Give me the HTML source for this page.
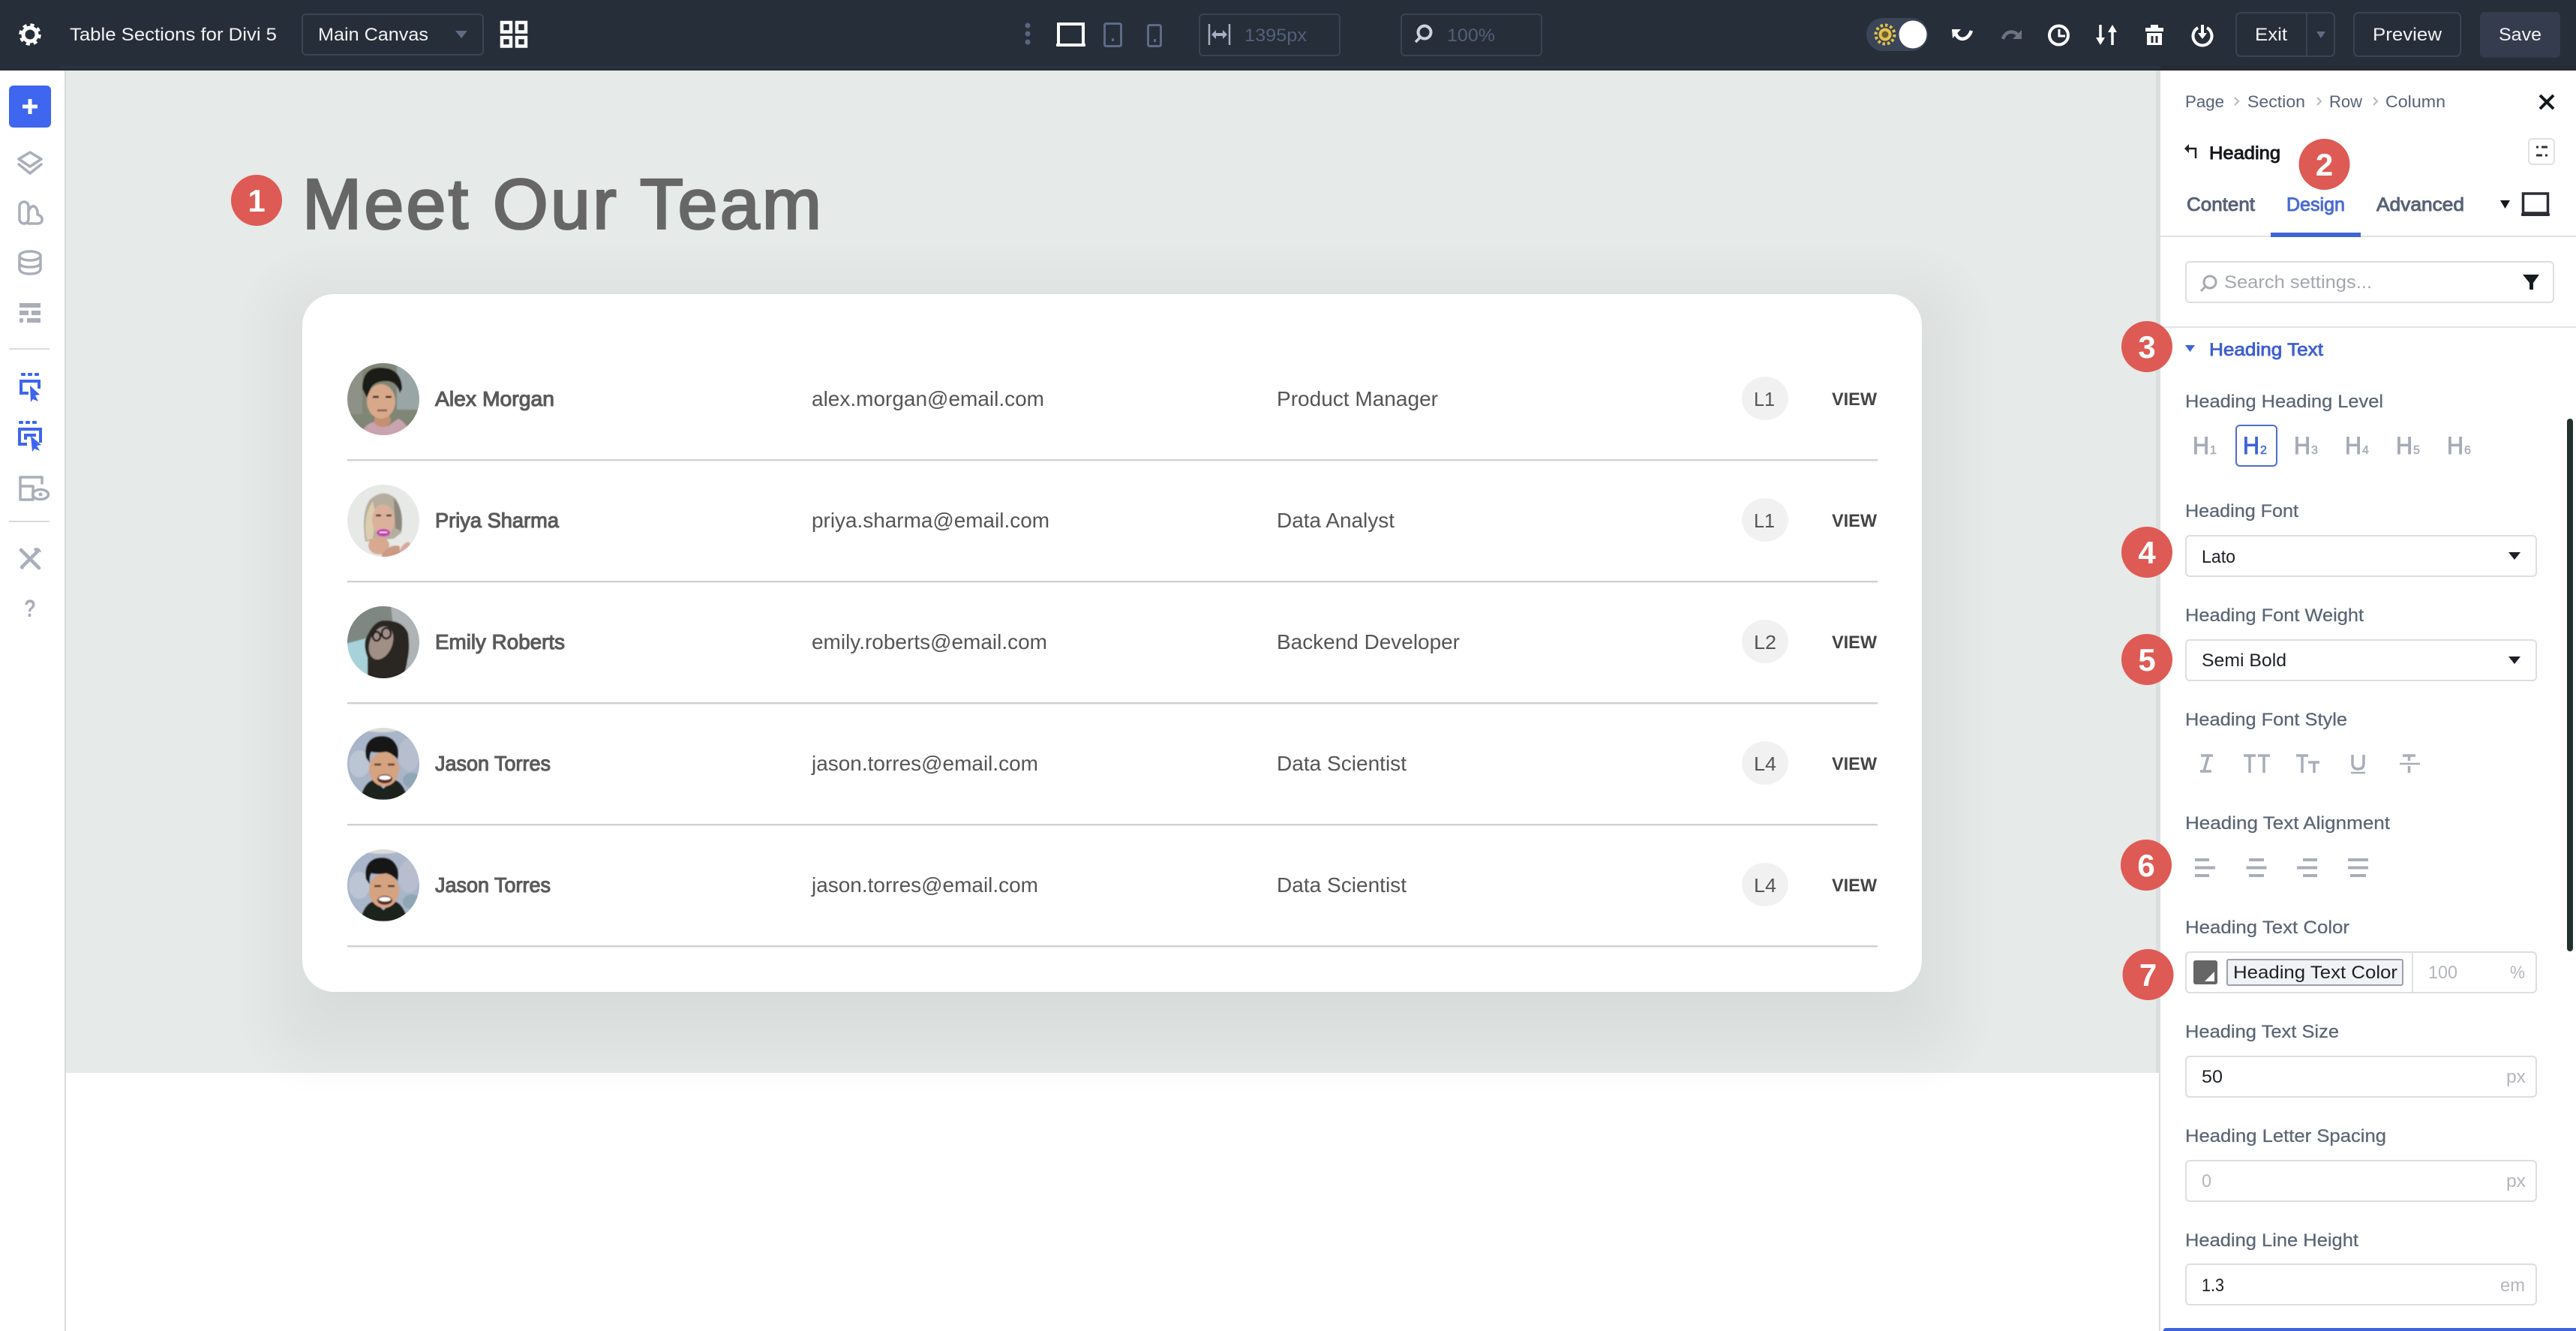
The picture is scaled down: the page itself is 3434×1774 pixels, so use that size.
<!DOCTYPE html>
<html lang="en">
<head>
<meta charset="utf-8">
<title>Table Sections for Divi 5</title>
<style>
html,body{margin:0;padding:0;background:#fff;width:3434px;height:1774px;overflow:hidden}
svg{display:block;font-family:"Liberation Sans",sans-serif}
.lb{font-size:24px;fill:#5b6574;stroke:#5b6574;stroke-width:.25px}
.tb{font-size:24px;fill:#f2f3f5}
.nm{font-size:28px;fill:#5a5a5a;stroke:#5a5a5a;stroke-width:1.1px}
.tx{font-size:28px;fill:#555}
.lv{font-size:26px;fill:#555}
.vw{font-size:24px;font-weight:700;fill:#444}
.bd{font-size:42px;font-weight:700;fill:#fff;text-anchor:middle}
.hh{font-size:32px;fill:#a7abb6;stroke:#a7abb6;stroke-width:1px}
.hs{font-size:16px;fill:#a7abb6;stroke:#a7abb6;stroke-width:.5px}
.gy{font-size:24px;fill:#b3b6bc}
.dk{font-size:24px;fill:#1d2024}
.tab{font-size:25px;fill:#566176;stroke:#566176;stroke-width:.9px}
</style>
</head>
<body>
<svg xmlns="http://www.w3.org/2000/svg" width="3434" height="1774" viewBox="0 0 3434 1774">
<defs>
<filter id="soft" x="-10%" y="-10%" width="120%" height="120%"><feGaussianBlur stdDeviation="0.8"/></filter>
<clipPath id="cp"><circle r="48"/></clipPath>
<g id="jason" clip-path="url(#cp)">
<g filter="url(#soft)">
<rect x="-50" y="-50" width="100" height="100" fill="#a9b5c9"/>
<ellipse cx="-2" cy="-50" rx="30" ry="8" fill="#dcdcd8"/>
<ellipse cx="-32" cy="0" rx="14" ry="18" fill="#bcc5d4"/>
<ellipse cx="34" cy="-12" rx="14" ry="22" fill="#b7bfcf"/>
<ellipse cx="38" cy="22" rx="12" ry="10" fill="#8fa6b4"/>
<path d="M-31 48Q-26 24-12 21L0 33L14 21Q27 24 33 48Z" fill="#1b201d"/>
<path d="M-12 21Q0 38 14 21L12 12H-10Z" fill="#c79676"/>
<ellipse cx="1" cy="7" rx="20" ry="23" fill="#d6a381"/>
<path d="M-23-8Q-27-30-10-36Q12-41 19-22Q21-14 19-6Q12-14 4-16Q-8-14-16-16Q-19-12-18-1Z" fill="#141312"/>
<path d="M-12 1H-3M6 1H15" stroke="#4b3527" stroke-width="2.500"/>
<ellipse cx="2" cy="20" rx="10" ry="6" fill="#5b2c22"/>
<ellipse cx="2" cy="18.500" rx="8" ry="3" fill="#fff"/>
</g>
</g>
</defs>

<!-- base -->
<rect width="3434" height="1774" fill="#fff"/>
<rect x="86" y="94" width="2" height="1680" fill="#d9dbdc"/>
<rect x="88" y="94" width="2790" height="1336" fill="#e6eae9"/>

<!-- card shadow (layered) -->
<g fill="#1e1e32" fill-opacity=".0055">
<rect x="318" y="328" width="2337" height="1129" rx="112"/>
<rect x="327" y="337" width="2319" height="1111" rx="104"/>
<rect x="336" y="346" width="2301" height="1093" rx="96"/>
<rect x="345" y="355" width="2283" height="1075" rx="88"/>
<rect x="354" y="364" width="2265" height="1057" rx="80"/>
<rect x="363" y="373" width="2247" height="1039" rx="72"/>
<rect x="372" y="382" width="2229" height="1021" rx="64"/>
<rect x="381" y="391" width="2211" height="1003" rx="56"/>
<rect x="390" y="400" width="2193" height="985" rx="50"/>
<rect x="399" y="409" width="2175" height="967" rx="46"/>
<rect x="408" y="418" width="2157" height="949" rx="42"/>
<rect x="417" y="427" width="2139" height="931" rx="42"/>
<rect x="426" y="436" width="2121" height="913" rx="42"/>
<rect x="435" y="445" width="2103" height="895" rx="42"/>
<rect x="444" y="454" width="2085" height="877" rx="42"/>
<rect x="453" y="463" width="2067" height="859" rx="42"/>
</g>
<rect x="403" y="392" width="2159" height="930" rx="42" fill="#fff"/>

<!-- heading -->
<text x="403" y="304.500" font-size="95" fill="#666" stroke="#666" stroke-width="2.800" textLength="692" lengthAdjust="spacing">Meet Our Team</text>

<!-- row dividers -->
<g fill="#d0d0d0">
<rect x="463" y="612" width="2040" height="2.4"/>
<rect x="463" y="774" width="2040" height="2.4"/>
<rect x="463" y="936" width="2040" height="2.4"/>
<rect x="463" y="1098" width="2040" height="2.4"/>
<rect x="463" y="1260" width="2040" height="2.4"/>
</g>

<!-- avatars -->
<g transform="translate(511,532)" clip-path="url(#cp)">
<g filter="url(#soft)">
<rect x="-50" y="-50" width="100" height="100" fill="#7f8676"/>
<rect x="-50" y="-50" width="22" height="70" fill="#8e9186"/>
<rect x="18" y="-50" width="32" height="64" fill="#9aa5a6"/>
<path d="M-32 50Q-24 30-8 30L6 36L20 26Q32 32 38 50Z" fill="#c9a3ad"/>
<ellipse cx="-1" cy="28" rx="11" ry="9" fill="#c4906f"/>
<ellipse cx="-3" cy="3" rx="19" ry="23" fill="#d8a88b"/>
<path d="M-28-14Q-28-42-4-42Q24-42 25-14L22-8Q18-24 4-24Q-12-24-17-14L-22-2Z" fill="#1d1a18"/>
<path d="M-14-3H-6M3-3H11" stroke="#2a1e18" stroke-width="2.500"/>
<path d="M-8 15H5" stroke="#90564a" stroke-width="2.500"/>
</g>
</g>
<g transform="translate(511,694)" clip-path="url(#cp)">
<g filter="url(#soft)">
<rect x="-50" y="-50" width="100" height="100" fill="#e7e9e6"/>
<path d="M20 50Q22 30 34 28L48 50Z" fill="#d9aaa0"/>
<path d="M-24 28Q-30-10-18-28Q0-44 16-30Q28-12 24 16L14 24L-12 26Z" fill="#b5ae9f"/>
<path d="M-22 26Q-28-6-14-26L-10-8L-14 24Z" fill="#dccdae"/>
<path d="M14-30Q28-16 24 14L16 10Z" fill="#8d887e"/>
<ellipse cx="0" cy="-1" rx="15" ry="21" fill="#dbb19b"/>
<path d="M-10-7H-3M4-7H11" stroke="#44352c" stroke-width="2.500"/>
<ellipse cx="0" cy="16" rx="9" ry="5" fill="#c63fb0"/>
<path d="M-5 15.500H5" stroke="#fff" stroke-width="1.500"/>
<ellipse cx="-6" cy="33" rx="14" ry="12" fill="#d7a991"/>
<path d="M-2 44Q10 30 22 34L22 50H-2Z" fill="#cb9b83"/>
</g>
</g>
<g transform="translate(511,856)" clip-path="url(#cp)">
<g filter="url(#soft)">
<rect x="-50" y="-50" width="100" height="100" fill="#7e8782"/>
<path d="M10-50H50V50H20Z" fill="#aeb3b6"/>
<path d="M-50 2L-20 -6L-18 50H-50Z" fill="#a8d2d9"/>
<path d="M-24-3Q-14-28 0-29Q26-30 33-12Q36 8 32 24Q30 42 22 50H-21L-21 20Q-26 8-24-3Z" fill="#2c2724"/>
<ellipse cx="-3" cy="1" rx="15" ry="23" transform="rotate(22 -3 1)" fill="#a18f86"/>
<ellipse cx="-9" cy="-8" rx="5" ry="6" fill="none" stroke="#191716" stroke-width="2.500"/>
<ellipse cx="4" cy="-12" rx="6" ry="7" fill="none" stroke="#191716" stroke-width="2.500"/>
</g>
</g>
<use href="#jason" x="511" y="1018"/>
<use href="#jason" x="511" y="1180"/>

<!-- rows -->
<text x="580" y="541" class="nm" textLength="159" lengthAdjust="spacingAndGlyphs">Alex Morgan</text>
<text x="580" y="703" class="nm" textLength="165" lengthAdjust="spacingAndGlyphs">Priya Sharma</text>
<text x="580" y="865" class="nm" textLength="173" lengthAdjust="spacingAndGlyphs">Emily Roberts</text>
<text x="580" y="1027" class="nm" textLength="154" lengthAdjust="spacingAndGlyphs">Jason Torres</text>
<text x="580" y="1189" class="nm" textLength="154" lengthAdjust="spacingAndGlyphs">Jason Torres</text>

<text x="1082" y="541" class="tx" textLength="310" lengthAdjust="spacingAndGlyphs">alex.morgan@email.com</text>
<text x="1082" y="703" class="tx" textLength="317" lengthAdjust="spacingAndGlyphs">priya.sharma@email.com</text>
<text x="1082" y="865" class="tx" textLength="314" lengthAdjust="spacingAndGlyphs">emily.roberts@email.com</text>
<text x="1082" y="1027" class="tx" textLength="302" lengthAdjust="spacingAndGlyphs">jason.torres@email.com</text>
<text x="1082" y="1189" class="tx" textLength="302" lengthAdjust="spacingAndGlyphs">jason.torres@email.com</text>

<text x="1702" y="541" class="tx" textLength="215" lengthAdjust="spacingAndGlyphs">Product Manager</text>
<text x="1702" y="703" class="tx" textLength="157" lengthAdjust="spacingAndGlyphs">Data Analyst</text>
<text x="1702" y="865" class="tx" textLength="244" lengthAdjust="spacingAndGlyphs">Backend Developer</text>
<text x="1702" y="1027" class="tx" textLength="173" lengthAdjust="spacingAndGlyphs">Data Scientist</text>
<text x="1702" y="1189" class="tx" textLength="173" lengthAdjust="spacingAndGlyphs">Data Scientist</text>

<g fill="#f1f1f1">
<ellipse cx="2353" cy="531" rx="31" ry="29"/>
<ellipse cx="2353" cy="693" rx="31" ry="29"/>
<ellipse cx="2353" cy="855" rx="31" ry="29"/>
<ellipse cx="2353" cy="1017" rx="31" ry="29"/>
<ellipse cx="2353" cy="1179" rx="31" ry="29"/>
</g>
<text x="2338" y="541" class="lv" textLength="28" lengthAdjust="spacingAndGlyphs">L1</text>
<text x="2338" y="703" class="lv" textLength="28" lengthAdjust="spacingAndGlyphs">L1</text>
<text x="2338" y="865" class="lv" textLength="30" lengthAdjust="spacingAndGlyphs">L2</text>
<text x="2338" y="1027" class="lv" textLength="30" lengthAdjust="spacingAndGlyphs">L4</text>
<text x="2338" y="1189" class="lv" textLength="30" lengthAdjust="spacingAndGlyphs">L4</text>
<text x="2442" y="540" class="vw" textLength="60" lengthAdjust="spacingAndGlyphs">VIEW</text>
<text x="2442" y="702" class="vw" textLength="60" lengthAdjust="spacingAndGlyphs">VIEW</text>
<text x="2442" y="864" class="vw" textLength="60" lengthAdjust="spacingAndGlyphs">VIEW</text>
<text x="2442" y="1026" class="vw" textLength="60" lengthAdjust="spacingAndGlyphs">VIEW</text>
<text x="2442" y="1188" class="vw" textLength="60" lengthAdjust="spacingAndGlyphs">VIEW</text>

<!-- top bar -->
<rect width="3434" height="94" fill="#262e39"/>
<rect x="80" y="89" width="2800" height="1" fill="#343c48"/>
<rect x="2880" y="88" width="554" height="6" fill="#272a30"/>
<g fill="none" stroke="#fff">
<circle cx="40" cy="46" r="9" stroke-width="5"/>
<circle cx="40" cy="46" r="12.500" stroke-width="4.500" stroke-dasharray="5 4.820"/>
</g>
<text x="93" y="54" class="tb" textLength="276" lengthAdjust="spacingAndGlyphs">Table Sections for Divi 5</text>
<rect x="403" y="19" width="241" height="54" rx="5" fill="none" stroke="#3c4553" stroke-width="2"/>
<text x="424" y="54" class="tb" textLength="147" lengthAdjust="spacingAndGlyphs">Main Canvas</text>
<path d="M607 41H623L615 51Z" fill="#5f6b85"/>
<g fill="none" stroke="#fff" stroke-width="4.500">
<rect x="669" y="30" width="12" height="12.500"/><rect x="689" y="30" width="12" height="12.500"/>
<rect x="669" y="50" width="12" height="11.500"/><rect x="689" y="50" width="12" height="11.500"/>
</g>
<g fill="#5a6680"><circle cx="1370" cy="34" r="3.500"/><circle cx="1370" cy="45" r="3.500"/><circle cx="1370" cy="56" r="3.500"/></g>
<rect x="1411" y="32" width="33" height="28" fill="none" stroke="#fff" stroke-width="4"/>
<rect x="1408" y="58" width="39" height="4" rx="1" fill="#fff"/>
<rect x="1472.500" y="31.500" width="22" height="30" rx="2" fill="none" stroke="#5d6a88" stroke-width="3"/>
<rect x="1482" y="51" width="3" height="4" fill="#5d6a88"/>
<rect x="1530.500" y="33.500" width="17" height="28" rx="2" fill="none" stroke="#5d6a88" stroke-width="3"/>
<rect x="1538" y="52" width="3" height="4" fill="#5d6a88"/>
<rect x="1599" y="19" width="187" height="55" rx="5" fill="none" stroke="#3a4351" stroke-width="2"/>
<path d="M1612 32V60M1639 32V60" stroke="#a7afc4" stroke-width="2.500"/>
<path d="M1615 46L1621 40V44H1630V40L1636 46L1630 52V48H1621V52Z" fill="#a7afc4"/>
<text x="1659" y="55" class="tb" style="fill:#54607a" textLength="83" lengthAdjust="spacingAndGlyphs">1395px</text>
<rect x="1868" y="19" width="187" height="55" rx="5" fill="none" stroke="#3a4351" stroke-width="2"/>
<circle cx="1899" cy="43" r="8.500" fill="none" stroke="#cdd2dc" stroke-width="4"/>
<path d="M1893 50L1887 56" stroke="#cdd2dc" stroke-width="3.500"/>
<text x="1929" y="55" class="tb" style="fill:#54607a" textLength="64" lengthAdjust="spacingAndGlyphs">100%</text>
<rect x="2488" y="24" width="82" height="44" rx="22" fill="#3a4658"/>
<circle cx="2513" cy="46" r="12.500" fill="none" stroke="#e5c04a" stroke-width="4" stroke-dasharray="3.500 3"/>
<circle cx="2513" cy="46" r="8.500" fill="#e5c04a"/>
<circle cx="2513" cy="46" r="4.500" fill="#6c5f30"/>
<circle cx="2550" cy="46" r="18.500" fill="#fff"/>
<path d="M2607 44C2610 55 2623 55 2628 41" fill="none" stroke="#fff" stroke-width="4.500"/>
<path d="M2602 39H2614L2603 51Z" fill="#fff"/>
<path d="M2670 52C2673 41 2685 40 2690 47" fill="none" stroke="#6d7380" stroke-width="4.500"/>
<path d="M2695 40V52H2683Z" fill="#6d7380"/>
<circle cx="2744.500" cy="47" r="12.500" fill="none" stroke="#fff" stroke-width="4"/>
<path d="M2745 39V48H2753" fill="none" stroke="#fff" stroke-width="3"/>
<path d="M2800 33V52M2816 41V60" stroke="#fff" stroke-width="3.500"/>
<path d="M2794 50H2806L2800 60ZM2810 43H2822L2816 33Z" fill="#fff"/>
<path d="M2867 37V33H2877V37H2884V42H2860V37ZM2862 44H2882V60H2862Z" fill="#fff"/>
<path d="M2869 48V57M2875 48V57" stroke="#262e39" stroke-width="3"/>
<path d="M2930 37A12.500 12.500 0 1 0 2942 37" fill="none" stroke="#fff" stroke-width="4"/>
<path d="M2936 33V46" stroke="#fff" stroke-width="4"/>
<path d="M2930 44H2942L2936 52Z" fill="#fff"/>
<rect x="2981" y="17" width="131" height="58" rx="6" fill="none" stroke="#3a4351" stroke-width="2"/>
<rect x="3074" y="17" width="2" height="58" fill="#3a4351"/>
<text x="3006" y="54" class="tb" textLength="43" lengthAdjust="spacingAndGlyphs">Exit</text>
<path d="M3088 42H3100L3094 51Z" fill="#5f6b85"/>
<rect x="3138" y="17" width="142" height="58" rx="6" fill="none" stroke="#3a4351" stroke-width="2"/>
<text x="3163" y="54" class="tb" textLength="92" lengthAdjust="spacingAndGlyphs">Preview</text>
<rect x="3306" y="16" width="107" height="61" rx="6" fill="#343c4d"/>
<text x="3331" y="54" class="tb" textLength="57" lengthAdjust="spacingAndGlyphs">Save</text>

<!-- left sidebar -->
<rect x="12" y="114" width="56" height="56" rx="6" fill="#3e66ee"/>
<path d="M40 132V152M30 142H50" stroke="#fff" stroke-width="5"/>
<g fill="none" stroke="#a9aeb9" stroke-width="3.500" stroke-linejoin="round" stroke-linecap="round">
<path d="M40 203L55 212L40 222L25 212Z"/>
<path d="M25 219L40 231L55 219"/>
<rect x="26" y="269" width="12" height="29" rx="6"/>
<path d="M38 281Q43 271 48 277Q51 281 50 286Q57 288 56 294Q55 298 50 298H38"/>
<ellipse cx="40" cy="341" rx="14" ry="6"/>
<path d="M26 341V359Q28 365 40 365Q52 365 54 359V341M26 351Q28 356 40 356Q52 356 54 351"/>
<path d="M30 636H56V644M32 636H27V666H42M28 648H44V666"/>
<ellipse cx="54" cy="659" rx="10.500" ry="6.500"/>
</g>
<circle cx="54" cy="659" r="2.500" fill="#a9aeb9"/>
<path d="M28 733L52 757M51 734L29 756" stroke="#a9aeb9" stroke-width="4.500" stroke-linecap="round"/>
<path d="M45 731Q53 728 55 736L50 735L48 739Z M27 757L33 752L31 759Z" fill="#a9aeb9"/>
<g fill="#a9aeb9">
<rect x="26" y="404" width="28" height="6"/>
<rect x="26" y="414" width="12" height="6"/><rect x="42" y="414" width="12" height="6"/>
<rect x="26" y="424" width="5" height="6" rx="2"/><rect x="36" y="424" width="18" height="6"/>
</g>
<rect x="12" y="464" width="54" height="2" fill="#d9dbde"/>
<rect x="12" y="694" width="54" height="2" fill="#d9dbde"/>
<g fill="#3e66ee">
<rect x="28" y="497" width="6" height="4" rx="1"/><rect x="37" y="497" width="6" height="4" rx="1"/><rect x="46" y="497" width="6" height="4" rx="1"/>
<path d="M26 506H54V518H50V510H30V522H38V526H26Z"/>
<path d="M40 514L53 526L47 527L51 535L44 532L41 536Z"/>
<rect x="25" y="561" width="6" height="4" rx="1"/><rect x="34" y="561" width="6" height="4" rx="1"/><rect x="43" y="561" width="6" height="4" rx="1"/>
<path d="M24 570H56V590H52V574H28V590H36V594H24ZM32 578H48V582H36V586H32Z"/>
<path d="M41 581L55 593L49 594L53 601L46 598L43 602Z"/>
</g>
<text x="32" y="822" font-size="32" font-weight="700" fill="#a9aeb9" textLength="16" lengthAdjust="spacingAndGlyphs">?</text>

<!-- right panel -->
<rect x="2874" y="94" width="6" height="1336" fill="#dcdfdf"/>
<rect x="2880" y="94" width="554" height="1680" fill="#fff"/>
<rect x="2878" y="1430" width="2" height="344" fill="#dcdcdc"/>

<text x="2913" y="143" font-size="22" fill="#56617a" textLength="52" lengthAdjust="spacingAndGlyphs">Page</text>
<text x="2996" y="143" font-size="22" fill="#56617a" textLength="77" lengthAdjust="spacingAndGlyphs">Section</text>
<text x="3105" y="143" font-size="22" fill="#56617a" textLength="44" lengthAdjust="spacingAndGlyphs">Row</text>
<text x="3180" y="143" font-size="22" fill="#56617a" textLength="80" lengthAdjust="spacingAndGlyphs">Column</text>
<path d="M2979 130L2984 135L2979 140M3089 130L3094 135L3089 140M3164 130L3169 135L3164 140" fill="none" stroke="#b4b8c0" stroke-width="2"/>
<path d="M3386 127L3404 145M3404 127L3386 145" stroke="#15181c" stroke-width="4"/>

<path d="M2927 211V198H2916" fill="none" stroke="#222" stroke-width="2.500"/>
<path d="M2918 192V204L2912 198Z" fill="#222"/>
<text x="2945" y="212" font-size="24" fill="#17191d" stroke="#17191d" stroke-width=".9" textLength="95" lengthAdjust="spacingAndGlyphs">Heading</text>
<rect x="3371" y="185" width="34" height="34" rx="5" fill="#fff" stroke="#dfe1e4" stroke-width="2"/>
<path d="M3381 196H3384M3388 196H3396M3381 207H3389M3393 207H3396" stroke="#333" stroke-width="3"/>

<text x="2915" y="281" class="tab" textLength="91" lengthAdjust="spacingAndGlyphs">Content</text>
<text x="3048" y="281" class="tab" style="fill:#4a6bd2;stroke:#4a6bd2" textLength="78" lengthAdjust="spacingAndGlyphs">Design</text>
<text x="3168" y="281" class="tab" textLength="117" lengthAdjust="spacingAndGlyphs">Advanced</text>
<path d="M3333 267H3346L3339.500 278Z" fill="#15181c"/>
<rect x="3363.500" y="258" width="33" height="26" fill="none" stroke="#2a2d33" stroke-width="3.500"/>
<rect x="3361" y="284" width="38" height="4" rx="1" fill="#2a2d33"/>
<rect x="2880" y="314" width="554" height="2" fill="#dfe1e4"/>
<rect x="3027" y="310" width="120" height="6" fill="#3f64d8"/>

<rect x="2914" y="349" width="490" height="54" rx="5" fill="#fff" stroke="#dcdee1" stroke-width="2"/>
<circle cx="2946" cy="376" r="8" fill="none" stroke="#a6a9b0" stroke-width="3"/>
<path d="M2940 382L2934 388" stroke="#a6a9b0" stroke-width="3"/>
<text x="2965" y="384" font-size="24" fill="#a4a7ae" textLength="197" lengthAdjust="spacingAndGlyphs">Search settings...</text>
<path d="M3363 366H3385L3377 377V386H3372V377Z" fill="#17191d"/>
<rect x="2880" y="435" width="554" height="2" fill="#e2e4e7"/>

<path d="M2913 460H2926L2919.500 469Z" fill="#3f64d8"/>
<text x="2945" y="474" font-size="24" fill="#3e5fd0" stroke="#3e5fd0" stroke-width=".8" textLength="152" lengthAdjust="spacingAndGlyphs">Heading Text</text>

<text x="2913" y="543" class="lb" textLength="264" lengthAdjust="spacingAndGlyphs">Heading Heading Level</text>
<rect x="2981" y="567" width="54" height="54" rx="5" fill="#fff" stroke="#4f6ccd" stroke-width="2"/>
<text x="2923" y="605" class="hh" textLength="22" lengthAdjust="spacingAndGlyphs">H</text><text x="2946" y="605" class="hs">1</text>
<text x="2990" y="605" class="hh" style="fill:#3f64d8;stroke:#3f64d8" textLength="22" lengthAdjust="spacingAndGlyphs">H</text><text x="3013" y="605" class="hs" style="fill:#3f64d8;stroke:#3f64d8">2</text>
<text x="3058" y="605" class="hh" textLength="22" lengthAdjust="spacingAndGlyphs">H</text><text x="3081" y="605" class="hs">3</text>
<text x="3126" y="605" class="hh" textLength="22" lengthAdjust="spacingAndGlyphs">H</text><text x="3149" y="605" class="hs">4</text>
<text x="3194" y="605" class="hh" textLength="22" lengthAdjust="spacingAndGlyphs">H</text><text x="3217" y="605" class="hs">5</text>
<text x="3262" y="605" class="hh" textLength="22" lengthAdjust="spacingAndGlyphs">H</text><text x="3285" y="605" class="hs">6</text>

<rect x="3422" y="558" width="8" height="710" rx="4" fill="#22302e"/>

<text x="2913" y="689" class="lb" textLength="151" lengthAdjust="spacingAndGlyphs">Heading Font</text>
<rect x="2914" y="714" width="467" height="54" rx="5" fill="#fff" stroke="#dcdee1" stroke-width="2"/>
<text x="2935" y="750" class="dk" textLength="45" lengthAdjust="spacingAndGlyphs">Lato</text>
<path d="M3344 736H3360L3352 746Z" fill="#1d2024"/>

<text x="2913" y="828" class="lb" textLength="238" lengthAdjust="spacingAndGlyphs">Heading Font Weight</text>
<rect x="2914" y="853" width="467" height="54" rx="5" fill="#fff" stroke="#dcdee1" stroke-width="2"/>
<text x="2935" y="888" class="dk" textLength="113" lengthAdjust="spacingAndGlyphs">Semi Bold</text>
<path d="M3344 875H3360L3352 885Z" fill="#1d2024"/>

<text x="2913" y="967" class="lb" textLength="216" lengthAdjust="spacingAndGlyphs">Heading Font Style</text>
<path d="M2934 1007H2950M2933 1028H2948M2944 1007L2938 1028" fill="none" stroke="#a9adb8" stroke-width="3.500"/>
<path d="M2991 1007H3007M2999 1007V1030M3010 1007H3026M3018 1007V1030" fill="none" stroke="#a9adb8" stroke-width="3.500"/>
<path d="M3061 1007H3077M3069 1007V1030M3077 1016H3092M3085 1016V1030" fill="none" stroke="#a9adb8" stroke-width="3.500"/>
<path d="M3136 1006V1017Q3136 1025 3143.500 1025Q3151 1025 3151 1017V1006" fill="none" stroke="#a9adb8" stroke-width="3.500"/>
<path d="M3134 1030H3153" stroke="#a9adb8" stroke-width="2.500"/>
<path d="M3203 1007H3220M3211.500 1007V1014M3211.500 1021V1030" fill="none" stroke="#a9adb8" stroke-width="3.500"/>
<path d="M3199 1018H3226" stroke="#a9adb8" stroke-width="2.500"/>

<text x="2913" y="1105" class="lb" textLength="273" lengthAdjust="spacingAndGlyphs">Heading Text Alignment</text>
<g stroke="#a9adb8" stroke-width="4">
<path d="M2926 1146H2945M2926 1156.500H2953M2926 1167H2945"/>
<path d="M2998 1146H3018M2994.500 1156.500H3021.500M2998 1167H3018"/>
<path d="M3070 1146H3089M3062 1156.500H3089M3070 1167H3089"/>
<path d="M3130 1146H3157M3130 1156.500H3157M3133 1167H3154"/>
</g>

<text x="2913" y="1244" class="lb" textLength="219" lengthAdjust="spacingAndGlyphs">Heading Text Color</text>
<rect x="2914" y="1269" width="467" height="54" rx="5" fill="#fff" stroke="#dcdee1" stroke-width="2"/>
<rect x="3215" y="1269" width="2" height="54" fill="#dfe1e4"/>
<rect x="2924" y="1280" width="32" height="32" rx="3" fill="#666"/>
<path d="M2952 1295V1308H2939Z" fill="#fff"/>
<rect x="2969" y="1279" width="234" height="34" rx="2" fill="#f0f2f6" stroke="#9ca1ab" stroke-width="2"/>
<text x="2977" y="1304" class="dk" textLength="219" lengthAdjust="spacingAndGlyphs">Heading Text Color</text>
<text x="3237" y="1304" class="gy" textLength="39" lengthAdjust="spacingAndGlyphs">100</text>
<text x="3346" y="1304" class="gy" textLength="20" lengthAdjust="spacingAndGlyphs">%</text>

<text x="2913" y="1383" class="lb" textLength="205" lengthAdjust="spacingAndGlyphs">Heading Text Size</text>
<rect x="2914" y="1408" width="467" height="54" rx="5" fill="#fff" stroke="#dcdee1" stroke-width="2"/>
<text x="2935" y="1443" class="dk" textLength="28" lengthAdjust="spacingAndGlyphs">50</text>
<text x="3341" y="1443" class="gy" textLength="26" lengthAdjust="spacingAndGlyphs">px</text>

<text x="2913" y="1522" class="lb" textLength="268" lengthAdjust="spacingAndGlyphs">Heading Letter Spacing</text>
<rect x="2914" y="1547" width="467" height="54" rx="5" fill="#fff" stroke="#dcdee1" stroke-width="2"/>
<text x="2935" y="1582" class="gy" textLength="13" lengthAdjust="spacingAndGlyphs">0</text>
<text x="3341" y="1582" class="gy" textLength="26" lengthAdjust="spacingAndGlyphs">px</text>

<text x="2913" y="1661" class="lb" textLength="231" lengthAdjust="spacingAndGlyphs">Heading Line Height</text>
<rect x="2914" y="1685" width="467" height="54" rx="5" fill="#fff" stroke="#dcdee1" stroke-width="2"/>
<text x="2935" y="1721" class="dk" textLength="30" lengthAdjust="spacingAndGlyphs">1.3</text>
<text x="3333" y="1721" class="gy" textLength="33" lengthAdjust="spacingAndGlyphs">em</text>

<path d="M2884 1774V1773Q2884 1770 2888 1770H3434V1774Z" fill="#3d63dd"/>

<!-- annotation badges -->
<g fill="#de5a54">
<circle cx="342" cy="267" r="34"/>
<circle cx="3098.500" cy="219" r="34"/>
<circle cx="2862" cy="462" r="34"/>
<circle cx="2862" cy="736" r="34"/>
<circle cx="2862" cy="879" r="34"/>
<circle cx="2861" cy="1153" r="34"/>
<circle cx="2863.500" cy="1299" r="34"/>
</g>
<text x="342" y="282" class="bd">1</text>
<text x="3098.500" y="234" class="bd">2</text>
<text x="2862" y="477" class="bd">3</text>
<text x="2862" y="751" class="bd">4</text>
<text x="2862" y="894" class="bd">5</text>
<text x="2861" y="1168" class="bd">6</text>
<text x="2863.500" y="1314" class="bd">7</text>
</svg>
</body>
</html>
